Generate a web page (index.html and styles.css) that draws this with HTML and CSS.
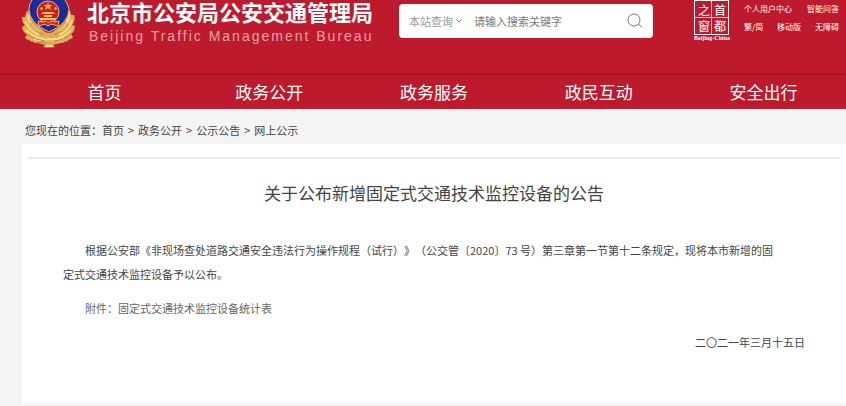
FILE: index.html
```
<!DOCTYPE html>
<html lang="zh-CN">
  <head>
    <meta charset="utf-8">
    <title>关于公布新增固定式交通技术监控设备的公告</title>
    <link rel="stylesheet" href="styles.css">
  </head>
  <body>
    <header class="header">
      <div class="brand">
        <svg class="emblem" viewBox="0 0 54 48" aria-hidden="true">
          <!-- wreath -->
          <path fill="#dcae58" d="M6 10 Q3 13 3 17 L0 17 Q0 23 3 25 L0 27 Q1 33 5 34 L3 38 Q6 41 10 40 L13 43 Q20 42 24 44 L21 47 Q27 48 33 47 L30 44 Q36 42 41 43 L44 40 Q49 40 51 37 L49 34 Q53 31 53 26 L50 25 Q54 20 52 15 L49 15 Q49 11 46 9 L43 22 L27 35 L11 22 Z"/>
          <path fill="#dcae58" d="M4 32 Q14 30 27 33 Q40 30 50 32 L46 41 L27 46 L8 41 Z"/>
          <path fill="none" stroke="#f6d98c" stroke-width="2" d="M6 14 Q6 26 17 32 M3 21 Q7 31 17 35 M4 30 Q11 38 23 39 M47 13 Q48 25 37 32 M50 20 Q47 31 37 35 M49 30 Q43 38 31 39 M12 39 Q20 41 27 39 Q35 41 42 38 M24 46 L31 46"/>
          <path fill="none" stroke="#bd8537" d="M8 23 Q12 31 22 35 M5 34 Q13 40 23 41 M46 23 Q42 31 32 35 M49 34 Q42 40 32 41 M14 42 L24 43"/>
          <!-- shield -->
          <path fill="#1d2a9a" stroke="#e9bf68" d="M10 -2 L10 0 Q7 4 7 9 Q7 16 12 22 Q18 28 27 32 Q36 28 42 22 Q47 16 47 9 Q46 4 43 0 L43 -2 Z"/>
          <circle cx="26" cy="12" r="11" fill="#d51b20" stroke="#e9bf68"/>
          <path fill="#f5c658" d="M26 2 L27 5 L30 5 L28 7 L29 10 L26 8 L23 10 L24 7 L22 5 L25 5 Z M19 7 l2 1 l-1 2 l-2 -1 Z M33 7 l2 1 l-1 2 l-2 -1 Z M21 12 L31 12 L33 14 L19 14 Z M22 15 H30 V17 H22 Z M18 18 H34 V20 H18 Z"/>
          <path fill="#d51b20" stroke="#f0bc55" d="M16 21 Q21 23 24 21 L26 23 L29 21 Q33 23 37 21 L36 26 L29 24 L26 26 L23 24 L17 26 Z"/>
        </svg>
        <div class="names">
          <h1 class="name">北京市公安局公安交通管理局</h1>
          <p class="name-en">Beijing Traffic Management Bureau</p>
        </div>
      </div>
      <form class="search">
        <select class="scope" aria-label="查询范围">
          <option>本站查询</option>
        </select>
        <svg class="arrow" viewBox="0 0 6 4" aria-hidden="true"><path d="M0.5 0.5 L3 3 L5.5 0.5"/></svg>
        <input class="keyword" type="text" placeholder="请输入搜索关键字" aria-label="搜索关键字">
        <button class="submit" type="submit" aria-label="搜索">
          <svg viewBox="0 0 16 16" aria-hidden="true"><circle cx="7" cy="7" r="6"/><path d="M11 11 L15 14"/></svg>
        </button>
      </form>
      <div class="tools">
        <a class="capital" href="#">
          <span class="seal"><span>之</span><span>首</span><span>窗</span><span>都</span></span>
          <span class="seal-en">Beijing-China</span>
        </a>
        <div class="links">
          <div class="links-row"><a href="#">个人用户中心</a><a href="#">智能问答</a></div>
          <div class="links-row"><a href="#">繁/简</a><a href="#">移动版</a><a href="#">无障碍</a></div>
        </div>
      </div>
    </header>

    <nav class="nav">
      <a href="#">首页</a>
      <a href="#">政务公开</a>
      <a href="#">政务服务</a>
      <a href="#">政民互动</a>
      <a href="#">安全出行</a>
    </nav>

    <div class="crumbs">
      <span>您现在的位置：</span><a href="#">首页</a><i>&gt;</i><a href="#">政务公开</a><i>&gt;</i><a href="#">公示公告</a><i>&gt;</i><a href="#">网上公示</a>
    </div>

    <main class="panel">
      <article class="article">
        <h2 class="title">关于公布新增固定式交通技术监控设备的公告</h2>
        <div class="text">
          <p>根据公安部《非现场查处道路交通安全违法行为操作规程（试行）》（公交管〔2020〕73 号）第三章第一节第十二条规定，现将本市新增的固<br>定式交通技术监控设备予以公布。</p>
          <p class="attach">附件：<a href="#">固定式交通技术监控设备统计表</a></p>
          <p class="date">二〇二一年三月十五日</p>
        </div>
      </article>
    </main>
  </body>
</html>
```
FILE: styles.css
```
* {
  margin: 0;
  padding: 0;
  box-sizing: border-box;
}

body {
  background: #f4f4f4;
  color: #444;
  font-family: "Noto Sans CJK SC", sans-serif;
  font-size: 11px;
  text-spacing-trim: space-all;
}

a {
  color: inherit;
  text-decoration: none;
}

.header {
  display: flex;
  align-items: flex-start;
  height: 73px;
  padding: 0 7px 0 22px;
  background: #bd1a2d;
  color: #fff;
}

.brand {
  display: flex;
  gap: 11px;
}

.emblem {
  width: 54px;
  height: 48px;
}

.names {
  max-width: 286px;
}

.name {
  font-family: "Liberation Sans", "Noto Sans CJK SC", sans-serif;
  font-size: 22px;
  line-height: 28px;
  white-space: nowrap;
}

.name-en {
  padding-left: 2px;
  color: #eba0a6;
  font-family: "Liberation Sans", Arial, sans-serif;
  font-size: 14px;
  line-height: 16px;
  letter-spacing: 2px;
  white-space: nowrap;
}

.search {
  display: flex;
  flex: 1;
  align-items: center;
  height: 34px;
  max-width: 254px;
  margin: 4px 0 0 26px;
  padding: 0 10px;
  border-radius: 4px;
  background: #fff;
}

.scope,
.keyword,
.submit {
  border: 0;
  outline: 0;
  background: none;
  font: inherit;
}

.scope {
  width: 46px;
  color: #999;
  appearance: none;
}

.arrow {
  width: 6px;
  height: 4px;
  margin: 0 12px 0 1px;
}

.arrow path,
.submit svg {
  fill: none;
  stroke: #777;
}

.keyword {
  flex: 1;
  min-width: 0;
}

.keyword::placeholder {
  color: #777;
}

.submit,
.submit svg {
  display: block;
  width: 16px;
  height: 16px;
}

.tools {
  display: flex;
  gap: 14px;
  margin-left: auto;
}

.capital {
  display: flex;
  flex-direction: column;
  align-items: center;
}

.seal {
  display: grid;
  grid-template-columns: 15px 15px;
  gap: 1px;
  padding: 1px;
  border: 1px solid #fff;
  background: linear-gradient(#f3c9ce, #f3c9ce) center / 1px 100% no-repeat,
    linear-gradient(#f3c9ce, #f3c9ce) center / 100% 1px no-repeat;
  font-size: 12px;
  line-height: 15px;
  text-align: center;
}

.seal-en {
  font-family: "Liberation Serif", serif;
  font-size: 6px;
  font-weight: bold;
  line-height: 6px;
}

.links {
  font-size: 8px;
  line-height: 18px;
  white-space: nowrap;
}

.links-row {
  display: flex;
  justify-content: space-between;
  gap: 15px;
}

.links-row + .links-row {
  gap: 12px;
}

.nav {
  display: grid;
  grid-template-columns: repeat(5, 1fr);
  padding-left: 22px;
  border-top: 2px solid #a81726;
  background: #bd1a2d;
  color: #fff;
  font-size: 17px;
  line-height: 34px;
  text-align: center;
}

.crumbs {
  padding: 8px 25px 1px;
  line-height: 26px;
}

.crumbs i {
  margin: 0 4px;
  font-style: normal;
}

.panel {
  margin-left: 22px;
  padding: 13px 6px 0;
  background: #fff;
}

.article {
  padding-bottom: 49px;
  border-top: 2px solid #e8e8e8;
}

.title {
  padding: 21px 0;
  font-size: 17px;
  font-weight: normal;
  line-height: 26px;
  text-align: center;
}

.text {
  padding: 11px 35px 0;
  line-height: 24px;
}

.text p {
  margin-bottom: 10px;
  text-indent: 2em;
}

.text .attach {
  color: #666;
}

.text .date {
  margin-bottom: 0;
  text-align: right;
}
```
